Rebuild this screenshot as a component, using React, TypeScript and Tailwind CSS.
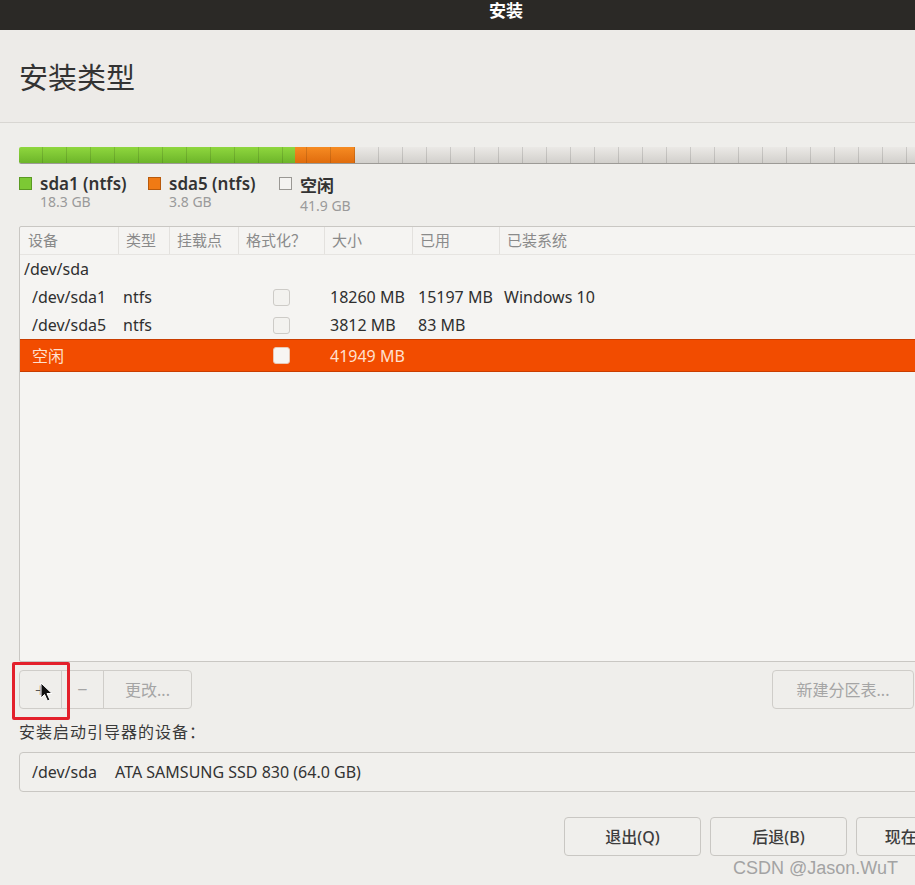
import React from 'react';

const FONT = { fontFamily: '"Noto Sans", "Noto Sans CJK SC", sans-serif' };

function Checkbox({ light }: { light?: boolean }) {
  return (
    <div
      className={
        light
          ? 'w-[17px] h-[17px] rounded-[3px] bg-[#f7f5f3] border border-[#e9c7b4]'
          : 'w-[17px] h-[17px] rounded-[3px] bg-[#f3f2ef] border border-[#cdcbc7]'
      }
    />
  );
}

type Row = {
  dev: string;
  indent?: boolean;
  type?: string;
  check?: boolean;
  size?: string;
  used?: string;
  os?: string;
  selected?: boolean;
};

const rows: Row[] = [
  { dev: '/dev/sda' },
  { dev: '/dev/sda1', indent: true, type: 'ntfs', check: true, size: '18260 MB', used: '15197 MB', os: 'Windows 10' },
  { dev: '/dev/sda5', indent: true, type: 'ntfs', check: true, size: '3812 MB', used: '83 MB' },
  { dev: '空闲', indent: true, check: true, size: '41949 MB', selected: true },
];

const cols = 'grid grid-cols-[98px_51px_69px_86px_88px_87px_1fr]';

export default function App() {
  return (
    <div className="relative w-[915px] h-[885px] overflow-hidden bg-[#efeeeb] text-[#3b3b3b]" style={FONT}>
      {/* window title */}
      <div className="h-[30px] bg-[#2b2926]">
        <div className="w-[1012px] h-full flex items-start pt-[0px] justify-center text-white font-bold text-[17px] leading-[22px]">
          安装
        </div>
      </div>

      {/* header */}
      <div className="h-[93px] bg-[#edebe8] border-b border-[#d8d6d2] flex items-center pl-[19px] pt-[3px]">
        <h1 className="text-[29px] font-normal text-[#333]">安装类型</h1>
      </div>

      <div className="w-[974px] ml-[19px]">
        {/* partition bar */}
        <div className="relative mt-[24px] h-[17px] flex rounded-[2px] overflow-hidden border-b border-[#9c9a96]">
          <div className="w-[276px] bg-gradient-to-b from-[#8fd73e] to-[#6db52a]" />
          <div className="w-[60px] bg-gradient-to-b from-[#f68b22] to-[#e06c0c]" />
          <div className="flex-1 bg-gradient-to-b from-[#ebe9e6] to-[#d2d0cc]" />
          <div className="absolute inset-0 bg-[repeating-linear-gradient(90deg,transparent_0px,transparent_23px,rgba(0,0,0,0.13)_23px,rgba(0,0,0,0.13)_24px)]" />
        </div>

        {/* legend */}
        <div className="flex mt-[10px] h-[52px]">
          <div className="flex w-[129px]">
            <div className="w-[13px] h-[13px] mt-[3px] bg-[#7cc934] border border-[#5a9a22]" />
            <div className="ml-[8px]">
              <div className="text-[17px] font-semibold leading-[19px] text-[#333] whitespace-nowrap">sda1 (ntfs)</div>
              <div className="text-[14px] leading-[17px] text-[#9a9a9a]">18.3 GB</div>
            </div>
          </div>
          <div className="flex w-[131px]">
            <div className="w-[13px] h-[13px] mt-[3px] bg-[#f07a14] border border-[#b85a0c]" />
            <div className="ml-[8px]">
              <div className="text-[17px] font-semibold leading-[19px] text-[#333] whitespace-nowrap">sda5 (ntfs)</div>
              <div className="text-[14px] leading-[17px] text-[#9a9a9a]">3.8 GB</div>
            </div>
          </div>
          <div className="flex">
            <div className="w-[13px] h-[13px] mt-[3px] bg-[#f4f3f1] border border-[#9a9894]" />
            <div className="ml-[8px]">
              <div className="text-[17px] font-semibold leading-[23px] text-[#333]">空闲</div>
              <div className="text-[14px] leading-[17px] text-[#9a9a9a]">41.9 GB</div>
            </div>
          </div>
        </div>

        {/* partition table */}
        <div className="h-[436px] bg-[#f5f4f2] border border-[#c9c7c3] rounded-[2px]">
          <div className={`${cols} h-[28px] items-center text-[15px] text-[#8a8a8a] border-b border-[#e6e4e1]`}>
            {['设备', '类型', '挂载点', '格式化？', '大小', '已用', '已装系统'].map((h, i) => (
              <div
                key={h}
                className={
                  i === 0
                    ? 'pl-[8px] h-full flex items-center'
                    : 'pl-[7px] h-full flex items-center border-l border-[#e3e1de]'
                }
              >
                {h}
              </div>
            ))}
          </div>
          {rows.map((r) => (
            <div
              key={r.dev}
              className={
                r.selected
                  ? `${cols} h-[33px] items-center text-[16px] bg-[#f24c00] text-[#ffe0cf] border-y border-[#c93d00]`
                  : `${cols} h-[28px] items-center text-[16px] text-[#2f2f2f]`
              }
            >
              <div className={r.indent ? 'pl-[12px] whitespace-nowrap' : 'pl-[4px] whitespace-nowrap'}>{r.dev}</div>
              <div className="pl-[5px]">{r.type}</div>
              <div />
              <div className="pl-[35px]">{r.check && <Checkbox light={r.selected} />}</div>
              <div className="pl-[6px] whitespace-nowrap">{r.size}</div>
              <div className="pl-[6px] whitespace-nowrap">{r.used}</div>
              <div className="pl-[5px] whitespace-nowrap">{r.os}</div>
            </div>
          ))}
        </div>

        {/* toolbar */}
        <div className="relative mt-[8px] flex justify-between">
          <div className="flex h-[39px] border border-[#cfcdc9] rounded-[4px] bg-[#efeeeb] text-[16px]">
            <div className="w-[42px] flex items-center justify-center text-[#555] text-[20px] font-light border-r border-[#cfcdc9]">+</div>
            <div className="w-[42px] flex items-center justify-center text-[#a5a5a5] text-[18px] border-r border-[#cfcdc9]">−</div>
            <div className="w-[87px] flex items-center justify-center text-[#a5a5a5]">更改...</div>
          </div>
          <div className="flex gap-[8px]">
            <div className="w-[142px] h-[39px] border border-[#cfcdc9] rounded-[4px] flex items-center justify-center text-[16px] text-[#a5a5a5]">
              新建分区表...
            </div>
            <div className="w-[71px] h-[39px] border border-[#cfcdc9] rounded-[4px] flex items-center justify-center text-[16px] text-[#a5a5a5]">
              还原
            </div>
          </div>

          {/* highlight box */}
          <div className="absolute left-[-7px] top-[-8px] w-[58px] h-[58px] border-[3px] border-[#e3202b] rounded-[2px]" />
          {/* mouse cursor */}
          <svg className="absolute left-[21px] top-[12px]" width="14" height="21" viewBox="0 0 14 21">
            <path d="M1 1 L1 16 L4.5 12.5 L7.5 19 L10 18 L7 11.5 L12 11.5 Z" fill="#111" stroke="#fff" strokeWidth="1" strokeLinejoin="round" />
          </svg>
        </div>

        {/* boot loader device */}
        <div className="mt-[12px] text-[16px] leading-[22px] tracking-[1px] text-[#3a3a3a]">安装启动引导器的设备：</div>
        <div className="mt-[9px] h-[40px] border border-[#c9c7c3] rounded-[4px] bg-[#f1f0ed] flex items-center pl-[12px] text-[16px] text-[#333]">
          <span>/dev/sda</span>
          <span className="ml-[18px]">ATA SAMSUNG SSD 830 (64.0 GB)</span>
        </div>

        {/* dialog buttons */}
        <div className="mt-[25px] flex justify-end gap-[9px]">
          {['退出(Q)', '后退(B)', '现在安装(I)'].map((b) => (
            <div
              key={b}
              className="w-[137px] h-[39px] border border-[#c9c7c3] rounded-[4px] bg-[#f0efec] flex items-center justify-center text-[16px] font-medium text-[#3d3d3d]"
            >
              {b}
            </div>
          ))}
        </div>
      </div>

      {/* watermark */}
      <div
        className="absolute left-[733px] top-[855px] text-[18px] text-[#a3a3a3] whitespace-nowrap"
        style={{ fontFamily: '"Liberation Sans", Arial, sans-serif' }}
      >
        CSDN @Jason.WuT
      </div>
    </div>
  );
}
